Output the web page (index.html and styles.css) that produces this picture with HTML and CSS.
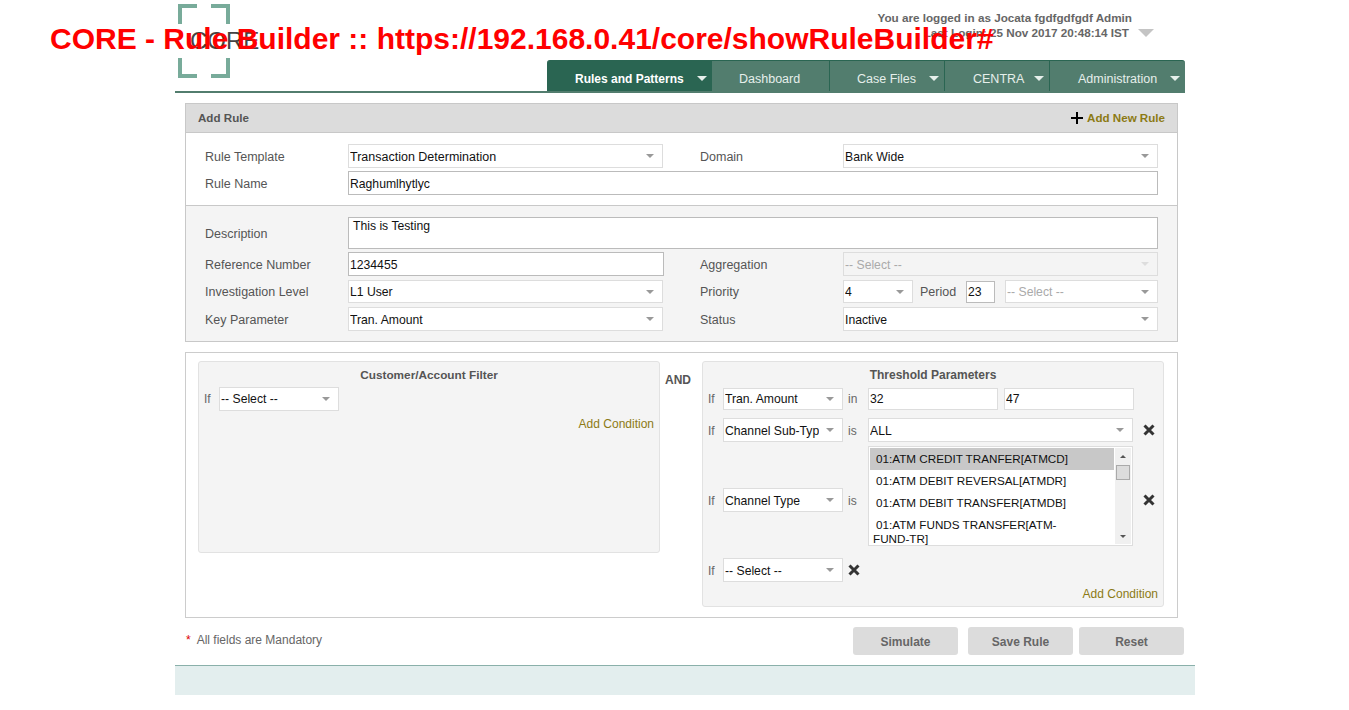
FILE: index.html
```html
<!DOCTYPE html>
<html lang="en">
<head>
    <meta charset="UTF-8">
    <meta name="viewport" content="width=device-width, initial-scale=1.0">
    <title>CORE - Rule Builder</title>
    <link rel="stylesheet" href="styles.css">
</head>
<body>
    <div class="page-title">CORE - Rule Builder :: https://192.168.0.41/core/showRuleBuilder#</div>

    <div class="wrapper">
        <div class="header">
            <div class="logo">
                <svg width="52" height="74" viewBox="0 0 52 74" fill="none" stroke="#78ab9a" stroke-width="4">
                    <path d="M2 20V2H19"/>
                    <path d="M33 2H50V20"/>
                    <path d="M2 54V72H19"/>
                    <path d="M33 72H50V54"/>
                </svg>
                <span class="logo-text">CORE</span>
            </div>
            <div class="header-right">
                <div class="user-info">
                    <div class="user-text">
                        <div>You are logged in as Jocata fgdfgdfgdf Admin</div>
                        <div class="last-login">Last Login: 25 Nov 2017 20:48:14 IST</div>
                    </div>
                    <span class="user-caret"></span>
                </div>
                <ul class="nav">
                    <li class="nav-item active">Rules and Patterns<span class="nav-caret"></span></li>
                    <li class="nav-item plain">Dashboard</li>
                    <li class="nav-item">Case Files<span class="nav-caret"></span></li>
                    <li class="nav-item">CENTRA<span class="nav-caret"></span></li>
                    <li class="nav-item">Administration<span class="nav-caret"></span></li>
                </ul>
            </div>
        </div>

        <div class="card">
            <div class="card-head">
                <span class="card-title">Add Rule</span>
                <a class="add-rule" href="#">
                    <svg width="12" height="12" viewBox="0 0 12 12"><path d="M6 0V12M0 6H12" stroke="#000" stroke-width="2"/></svg>
                    Add New Rule
                </a>
            </div>
            <div class="form-grid top">
                <label>Rule Template</label>
                <div class="sel large"><select><option>Transaction Determination</option></select></div>
                <label class="second">Domain</label>
                <div class="sel"><select><option>Bank Wide</option></select></div>
                <label>Rule Name</label>
                <input class="text wide" type="text" value="Raghumlhytlyc">
            </div>
            <div class="form-grid bottom">
                <label class="low">Description</label>
                <textarea class="text wide desc">This is Testing</textarea>
                <label class="low">Reference Number</label>
                <input class="text ref" type="text" value="1234455">
                <label class="second low">Aggregation</label>
                <div class="sel disabled"><select disabled><option>-- Select --</option></select></div>
                <label>Investigation Level</label>
                <div class="sel"><select><option>L1 User</option></select></div>
                <label class="second">Priority</label>
                <div class="priority">
                    <div class="sel small"><select><option>4</option></select></div>
                    <span class="period-label">Period</span>
                    <input class="text period" type="text" value="23">
                    <div class="sel grow muted"><select><option>-- Select --</option></select></div>
                </div>
                <label class="low">Key Parameter</label>
                <div class="sel full"><select><option>Tran. Amount</option></select></div>
                <label class="second low">Status</label>
                <div class="sel full"><select><option>Inactive</option></select></div>
            </div>
        </div>

        <div class="builder">
            <div class="panel left-panel">
                <div class="panel-title">Customer/Account Filter</div>
                <div class="cond-row">
                    <span class="if">If</span>
                    <div class="sel cond"><select><option>-- Select --</option></select></div>
                </div>
                <a class="add-cond" href="#">Add Condition</a>
            </div>
            <div class="and">AND</div>
            <div class="panel right-panel">
                <div class="panel-title">Threshold Parameters</div>
                <div class="cond-row first">
                    <span class="if">If</span>
                    <div class="sel cond"><select><option>Tran. Amount</option></select></div>
                    <span class="op">in</span>
                    <input class="text range" type="text" value="32">
                    <input class="text range" type="text" value="47">
                </div>
                <div class="cond-row">
                    <span class="if">If</span>
                    <div class="sel cond"><select><option>Channel Sub-Type</option></select></div>
                    <span class="op">is</span>
                    <div class="sel value"><select><option>ALL</option></select></div>
                    <svg class="remove" width="12" height="12" viewBox="0 0 12 12"><path d="M1.5 1.5L10.5 10.5M10.5 1.5L1.5 10.5" stroke="#333" stroke-width="3"/></svg>
                </div>
                <div class="cond-row tall">
                    <span class="if">If</span>
                    <div class="sel cond"><select><option>Channel Type</option></select></div>
                    <span class="op">is</span>
                    <div class="listbox">
                        <div class="list-items">
                            <div class="list-item selected">01:ATM CREDIT TRANFER[ATMCD]</div>
                            <div class="list-item">01:ATM DEBIT REVERSAL[ATMDR]</div>
                            <div class="list-item">01:ATM DEBIT TRANSFER[ATMDB]</div>
                            <div class="list-item">01:ATM FUNDS TRANSFER[ATM-<br>FUND-TR]</div>
                        </div>
                        <div class="scrollbar">
                            <span class="arrow-up"></span>
                            <span class="thumb"></span>
                            <span class="arrow-down"></span>
                        </div>
                    </div>
                    <svg class="remove" width="12" height="12" viewBox="0 0 12 12"><path d="M1.5 1.5L10.5 10.5M10.5 1.5L1.5 10.5" stroke="#333" stroke-width="3"/></svg>
                </div>
                <div class="cond-row last">
                    <span class="if">If</span>
                    <div class="sel cond"><select><option>-- Select --</option></select></div>
                    <svg class="remove near" width="12" height="12" viewBox="0 0 12 12"><path d="M1.5 1.5L10.5 10.5M10.5 1.5L1.5 10.5" stroke="#333" stroke-width="3"/></svg>
                </div>
                <a class="add-cond" href="#">Add Condition</a>
            </div>
        </div>

        <div class="actions">
            <div class="mandatory"><span class="star">*</span>All fields are Mandatory</div>
            <div class="buttons">
                <button class="btn">Simulate</button>
                <button class="btn">Save Rule</button>
                <button class="btn">Reset</button>
            </div>
        </div>

        <div class="footer"></div>
    </div>
</body>
</html>
```

FILE: styles.css
```css
* {
    box-sizing: border-box;
}
body {
    margin: 0;
    background-color: #fff;
    font-family: "Liberation Sans", Arial, sans-serif;
    font-size: 12px;
    color: #555;
}
.page-title {
    position: absolute;
    left: 50px;
    top: 20px;
    z-index: 5;
    font-size: 30px;
    line-height: 38px;
    font-weight: bold;
    color: #f00;
    white-space: nowrap;
}
.wrapper {
    width: 1020px;
    margin-left: 175px;
}

/* header */
.header {
    display: flex;
    width: 1010px;
    height: 93px;
    border-bottom: 2px solid #527d6e;
}
.logo {
    position: relative;
    width: 52px;
    height: 74px;
    margin: 4px 0 0 3px;
}
.logo-text {
    position: absolute;
    left: 12px;
    top: 23px;
    font-size: 24px;
    line-height: 28px;
    color: #444;
}
.header-right {
    display: flex;
    flex-direction: column;
    width: 638px;
    margin-left: 317px;
}
.user-info {
    display: flex;
    justify-content: flex-end;
    height: 60px;
    padding: 11px 31px 0 0;
    font-size: 11.7px;
    line-height: 14px;
    font-weight: bold;
    color: #666;
}
.user-text {
    text-align: right;
}
.last-login {
    margin: 1px 3px 0 0;
}
.user-caret {
    width: 0;
    height: 0;
    margin: 18px 0 0 6px;
    border-left: 8px solid transparent;
    border-right: 8px solid transparent;
    border-top: 8px solid #c4c4c4;
}
.nav {
    display: flex;
    height: 31px;
    margin: 0;
    padding: 0;
    list-style: none;
    background-color: #527d6e;
    border-top: 1px solid #2a6552;
    border-radius: 3px 3px 0 0;
}
.nav-item {
    position: relative;
    width: 115px;
    padding: 11px 0 0 28px;
    font-size: 12.5px;
    line-height: 14px;
    color: #e6efeb;
    border-right: 1px solid #2a6552;
}
.nav-item:first-child {
    width: 165px;
    border-right: 0;
    border-radius: 3px 0 0 0;
}
.nav-item:nth-child(2) {
    width: 118px;
    padding-left: 27px;
}
.nav-item:nth-child(3) {
    padding-left: 27px;
}
.nav-item:nth-child(4) {
    width: 105px;
}
.nav-item:last-child {
    width: 135px;
    border-right: 0;
}
.nav-item.active {
    background-color: #2a6552;
    font-size: 12px;
    font-weight: bold;
    color: #fff;
}
.nav-caret {
    position: absolute;
    right: 5px;
    top: 15px;
    width: 0;
    height: 0;
    border-left: 5px solid transparent;
    border-right: 5px solid transparent;
    border-top: 5px solid #e6efeb;
}

/* add rule card */
.card {
    width: 993px;
    margin: 10px 0 0 10px;
    border: 1px solid #c8c8c8;
    background-color: #f4f4f4;
}
.card-head {
    display: flex;
    justify-content: space-between;
    align-items: center;
    height: 29px;
    padding: 0 12px 1px;
    background-color: #dcdcdc;
    border-bottom: 1px solid #c8c8c8;
}
.card-title {
    font-size: 11.6px;
    font-weight: bold;
    color: #555;
}
.add-rule {
    display: flex;
    align-items: center;
    gap: 4px;
    font-size: 11.6px;
    font-weight: bold;
    color: #8c7a14;
    text-decoration: none;
}
.form-grid {
    display: grid;
    grid-template-columns: 143px 315px 180px 315px;
    align-items: center;
    padding: 11px 0 0 19px;
}
.form-grid.top {
    row-gap: 3px;
    height: 73px;
    align-content: start;
    background-color: #fff;
    border-bottom: 1px solid #c8c8c8;
}
.form-grid.bottom {
    row-gap: 4px;
    height: 135px;
    align-content: start;
}
.form-grid label {
    font-size: 12.5px;
    color: #555;
}
.form-grid.top label,
.form-grid label.low {
    padding-top: 2px;
}
.form-grid label.second {
    padding-left: 37px;
}
.wide {
    grid-column: 2 / 5;
}

/* inputs */
.text {
    height: 24px;
    padding: 0 1px;
    border: 1px solid #bbb;
    background-color: #fff;
    font-family: inherit;
    font-size: 12.2px;
    color: #111;
    outline: none;
}
.form-grid.top .text,
.ref {
    padding-top: 2px;
}
.desc {
    display: block;
    height: 32px;
    margin-bottom: -1px;
    padding: 1px 4px;
    resize: none;
}
.ref {
    width: 316px;
}
.sel {
    position: relative;
    height: 24px;
    border: 1px solid #ddd;
    background-color: #fff;
}
.sel select {
    display: block;
    width: 100%;
    height: 100%;
    padding: 0 23px 0 1px;
    border: 0;
    background: transparent;
    appearance: none;
    font-family: inherit;
    font-size: 12.2px;
    color: #111;
    outline: none;
}
.sel.large select {
    font-size: 12.5px;
}
.form-grid.top .sel select,
.sel.disabled select,
.sel.full select {
    padding-top: 2px;
}
.sel::after {
    content: "";
    position: absolute;
    right: 8px;
    top: 9px;
    width: 0;
    height: 0;
    border-left: 4px solid transparent;
    border-right: 4px solid transparent;
    border-top: 4px solid #999;
    pointer-events: none;
}
.form-grid.bottom .sel {
    height: 23px;
}
.form-grid.bottom .sel.disabled,
.form-grid.bottom .sel.full {
    height: 24px;
}
.sel.disabled {
    background-color: #f4f4f4;
}
.sel.disabled select,
.sel.muted select {
    color: #aaa;
    opacity: 1;
}
.sel.disabled::after {
    border-top-color: #ddd;
}
.priority {
    display: flex;
    align-items: center;
}
.priority .sel.small {
    width: 70px;
}
.period-label {
    width: 53px;
    padding-left: 7px;
    font-size: 12.5px;
    color: #555;
}
.period {
    width: 29px;
    height: 22px;
    padding: 0 1px;
}
.priority .sel.grow {
    width: 153px;
    margin-left: 10px;
}

/* rule builder */
.builder {
    display: flex;
    align-items: flex-start;
    width: 993px;
    height: 266px;
    margin: 10px 0 0 10px;
    padding: 8px 0 0 12px;
    border: 1px solid #ccc;
}
.panel {
    position: relative;
    width: 462px;
    border: 1px solid #e2e2e2;
    border-radius: 3px;
    background-color: #f4f4f4;
}
.left-panel {
    height: 192px;
    padding-left: 5px;
}
.right-panel {
    height: 246px;
    padding-left: 5px;
}
.panel-title {
    height: 26px;
    margin-left: -5px;
    padding-top: 6px;
    line-height: 14px;
    text-align: center;
    font-size: 11.8px;
    font-weight: bold;
    color: #555;
}
.right-panel .panel-title {
    font-size: 12px;
}
.left-panel .panel-title {
    height: 25px;
}
.and {
    width: 42px;
    padding: 12px 0 0 5px;
    line-height: 14px;
    font-weight: bold;
}
.cond-row {
    display: flex;
    align-items: center;
}
.cond-row.first {
    margin-bottom: 8px;
}
.cond-row.first .sel {
    height: 22px;
}
.cond-row.first .sel::after {
    top: 8px;
}
.cond-row.tall {
    margin: 4px 0 12px;
}
.cond-row.tall > :not(.listbox) {
    margin-top: 8px;
}
.if {
    width: 15px;
    color: #666;
}
.op {
    width: 25px;
    padding-left: 5px;
    color: #666;
}
.right-panel .cond-row:not(.first) .if,
.right-panel .cond-row:not(.first) .op {
    padding-top: 2px;
}
.right-panel .cond-row:not(.first) select {
    padding-top: 2px;
}
.sel.cond {
    width: 120px;
}
.range {
    width: 130px;
    height: 22px;
    margin-right: 6px;
    border-color: #ddd;
}
.sel.value {
    width: 265px;
}
.remove {
    margin-left: 10px;
}
.remove.near {
    margin-left: 5px;
}
.add-cond {
    position: absolute;
    right: 5px;
    bottom: 5px;
    line-height: 14px;
    color: #8c7a14;
    text-decoration: none;
}
.left-panel .add-cond {
    bottom: auto;
    top: 55px;
}
.listbox {
    display: flex;
    width: 265px;
    height: 100px;
    padding: 1px;
    border: 1px solid #ddd;
    background-color: #fff;
    overflow: hidden;
}
.list-items {
    width: 244px;
    flex-shrink: 0;
    font-size: 11.7px;
    color: #111;
}
.list-item {
    padding: 4px 3px;
    line-height: 14px;
    text-indent: 3px;
}
.list-item.selected {
    background-color: #c8c8c8;
}
.scrollbar {
    position: relative;
    width: 16px;
    margin-left: 1px;
    background-color: #f0f0f0;
}
.thumb {
    position: absolute;
    left: 1px;
    top: 17px;
    width: 14px;
    height: 15px;
    border: 1px solid #aaa;
    background-color: #dcdcdc;
}
.arrow-up,
.arrow-down {
    position: absolute;
    left: 5px;
    width: 0;
    height: 0;
    border-left: 3px solid transparent;
    border-right: 3px solid transparent;
}
.arrow-up {
    top: 7px;
    border-bottom: 3px solid #555;
}
.arrow-down {
    bottom: 6px;
    border-top: 3px solid #555;
}

/* bottom */
.actions {
    display: flex;
    justify-content: space-between;
    margin: 9px 11px 0 11px;
}
.mandatory {
    padding-top: 6px;
    line-height: 14px;
    color: #666;
}
.star {
    margin-right: 6px;
    color: #d00;
}
.buttons {
    display: flex;
    gap: 10px;
}
.btn {
    width: 105px;
    height: 28px;
    padding: 2px 0 0;
    border: 0;
    border-radius: 3px;
    background-color: #dcdcdc;
    font-family: inherit;
    font-size: 12px;
    font-weight: bold;
    color: #666;
}
.btn:last-child {
    margin-left: -4px;
}
.footer {
    height: 30px;
    margin-top: 10px;
    background-color: #e3eeee;
    border-top: 1px solid #8ab0aa;
}
```
